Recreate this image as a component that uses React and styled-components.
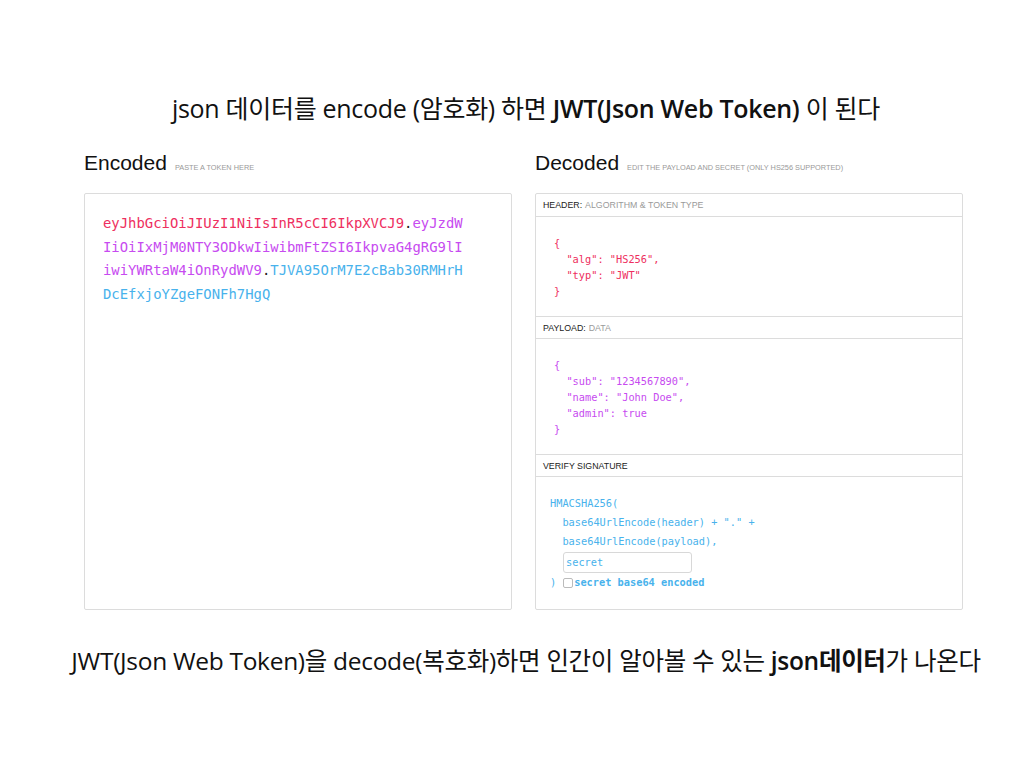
import React from 'react';
import styled, { createGlobalStyle } from 'styled-components';

const Global = createGlobalStyle`
  html, body {
    margin: 0;
    padding: 0;
    background: #fff;
  }
`;

const Page = styled.div`
  width: 1024px;
  height: 768px;
  box-sizing: border-box;
  padding-left: 28px;
  display: flex;
  flex-direction: column;
  align-items: center;
  font-family: "Open Sans", "Noto Sans CJK KR", sans-serif;
  color: #111;
`;

const Caption = styled.div`
  font-size: ${p => p.size}px;
  line-height: 32px;
  letter-spacing: -0.3px;
  margin-top: ${p => p.top}px;
  white-space: nowrap;

  b {
    font-weight: 600;
  }
`;

const Columns = styled.div`
  display: flex;
  gap: 23px;
  margin-top: 27px;
  padding-left: 56px;
  align-self: flex-start;
`;

const Column = styled.div`
  width: 428px;
  display: flex;
  flex-direction: column;
`;

const Heading = styled.div`
  display: flex;
  align-items: baseline;
  gap: 8px;
  height: 42px;
  font-family: "Liberation Sans", Arial, sans-serif;
`;

const HeadTitle = styled.span`
  font-size: 21px;
  color: #111;
`;

const HeadNote = styled.span`
  font-size: 7.35px;
  color: #999;
  text-transform: uppercase;
`;

const Box = styled.div`
  height: 417px;
  box-sizing: border-box;
  border: 1px solid #dcdcdc;
  border-radius: 2px;
  background: #fff;
  display: flex;
  flex-direction: column;
`;

const Token = styled.div`
  width: calc(43ch + 3px);
  padding: 18px 0 0 18px;
  font-family: "DejaVu Sans Mono", monospace;
  font-size: 13.9px;
  line-height: 23.5px;
  word-break: break-all;
`;

const Part = styled.span`
  color: ${p => p.color};
`;

const BarTitle = styled.div`
  height: 23px;
  box-sizing: border-box;
  display: flex;
  align-items: center;
  gap: 3px;
  padding-left: 7px;
  border-top: ${p => (p.first ? 'none' : '1px solid #dcdcdc')};
  border-bottom: 1px solid #dcdcdc;
  font-family: "Liberation Sans", Arial, sans-serif;
  font-size: 8.8px;
  color: #222;
`;

const BarNote = styled.span`
  color: #9a9a9a;
`;

const Code = styled.pre`
  margin: 0;
  height: ${p => p.h}px;
  box-sizing: border-box;
  padding: ${p => p.pad || '18px 0 0 18px'};
  font-family: "DejaVu Sans Mono", monospace;
  font-size: 10.3px;
  line-height: ${p => p.lh || 16}px;
  color: ${p => p.color};
`;

const SecretInput = styled.div`
  width: 129px;
  height: 21px;
  box-sizing: border-box;
  margin: 1px 0 0 13px;
  border: 1px solid #d8d8d8;
  border-radius: 3px;
  padding-left: 2px;
  line-height: 19px;
`;

const CheckRow = styled.div`
  display: flex;
  align-items: center;
  height: 19px;
`;

const Check = styled.span`
  display: inline-block;
  width: 8px;
  height: 8px;
  border: 1px solid #bbb;
  border-radius: 2px;
  margin: 0 1px 0 7px;
`;

const Bold = styled.span`
  font-weight: 700;
`;

const RED = '#ee2f60';
const PURPLE = '#c74bf0';
const BLUE = '#48b2ec';

export default function App() {
  return (
    <Page>
      <Global />
      <Caption top={92} size={25}>
        json 데이터를 encode (암호화) 하면 <b>JWT(Json Web Token)</b> 이 된다
      </Caption>
      <Columns>
        <Column>
          <Heading>
            <HeadTitle>Encoded</HeadTitle>
            <HeadNote>Paste a token here</HeadNote>
          </Heading>
          <Box>
            <Token>
              <Part color={RED}>eyJhbGciOiJIUzI1NiIsInR5cCI6IkpXVCJ9</Part>
              <Part color="#222">.</Part>
              <Part color={PURPLE}>eyJzdWIiOiIxMjM0NTY3ODkwIiwibmFtZSI6IkpvaG4gRG9lIiwiYWRtaW4iOnRydWV9</Part>
              <Part color="#222">.</Part>
              <Part color={BLUE}>TJVA95OrM7E2cBab30RMHrHDcEfxjoYZgeFONFh7HgQ</Part>
            </Token>
          </Box>
        </Column>
        <Column>
          <Heading>
            <HeadTitle>Decoded</HeadTitle>
            <HeadNote>Edit the payload and secret (only HS256 supported)</HeadNote>
          </Heading>
          <Box>
            <BarTitle first>
              HEADER: <BarNote>ALGORITHM &amp; TOKEN TYPE</BarNote>
            </BarTitle>
            <Code h={99} color={RED}>{`{
  "alg": "HS256",
  "typ": "JWT"
}`}</Code>
            <BarTitle>
              PAYLOAD: <BarNote>DATA</BarNote>
            </BarTitle>
            <Code h={115} color={PURPLE}>{`{
  "sub": "1234567890",
  "name": "John Doe",
  "admin": true
}`}</Code>
            <BarTitle>VERIFY SIGNATURE</BarTitle>
            <Code as="div" h={131} color={BLUE} lh={19} pad="17px 0 0 14px">
              <div>HMACSHA256(</div>
              <div>&nbsp;&nbsp;base64UrlEncode(header) + "." +</div>
              <div>&nbsp;&nbsp;base64UrlEncode(payload),</div>
              <SecretInput>secret</SecretInput>
              <CheckRow>
                )<Check />
                <Bold>secret base64 encoded</Bold>
              </CheckRow>
            </Code>
          </Box>
        </Column>
      </Columns>
      <Caption top={35} size={24.5}>
        JWT(Json Web Token)을 decode(복호화)하면 인간이 알아볼 수 있는 <b>json데이터</b>가 나온다
      </Caption>
    </Page>
  );
}
